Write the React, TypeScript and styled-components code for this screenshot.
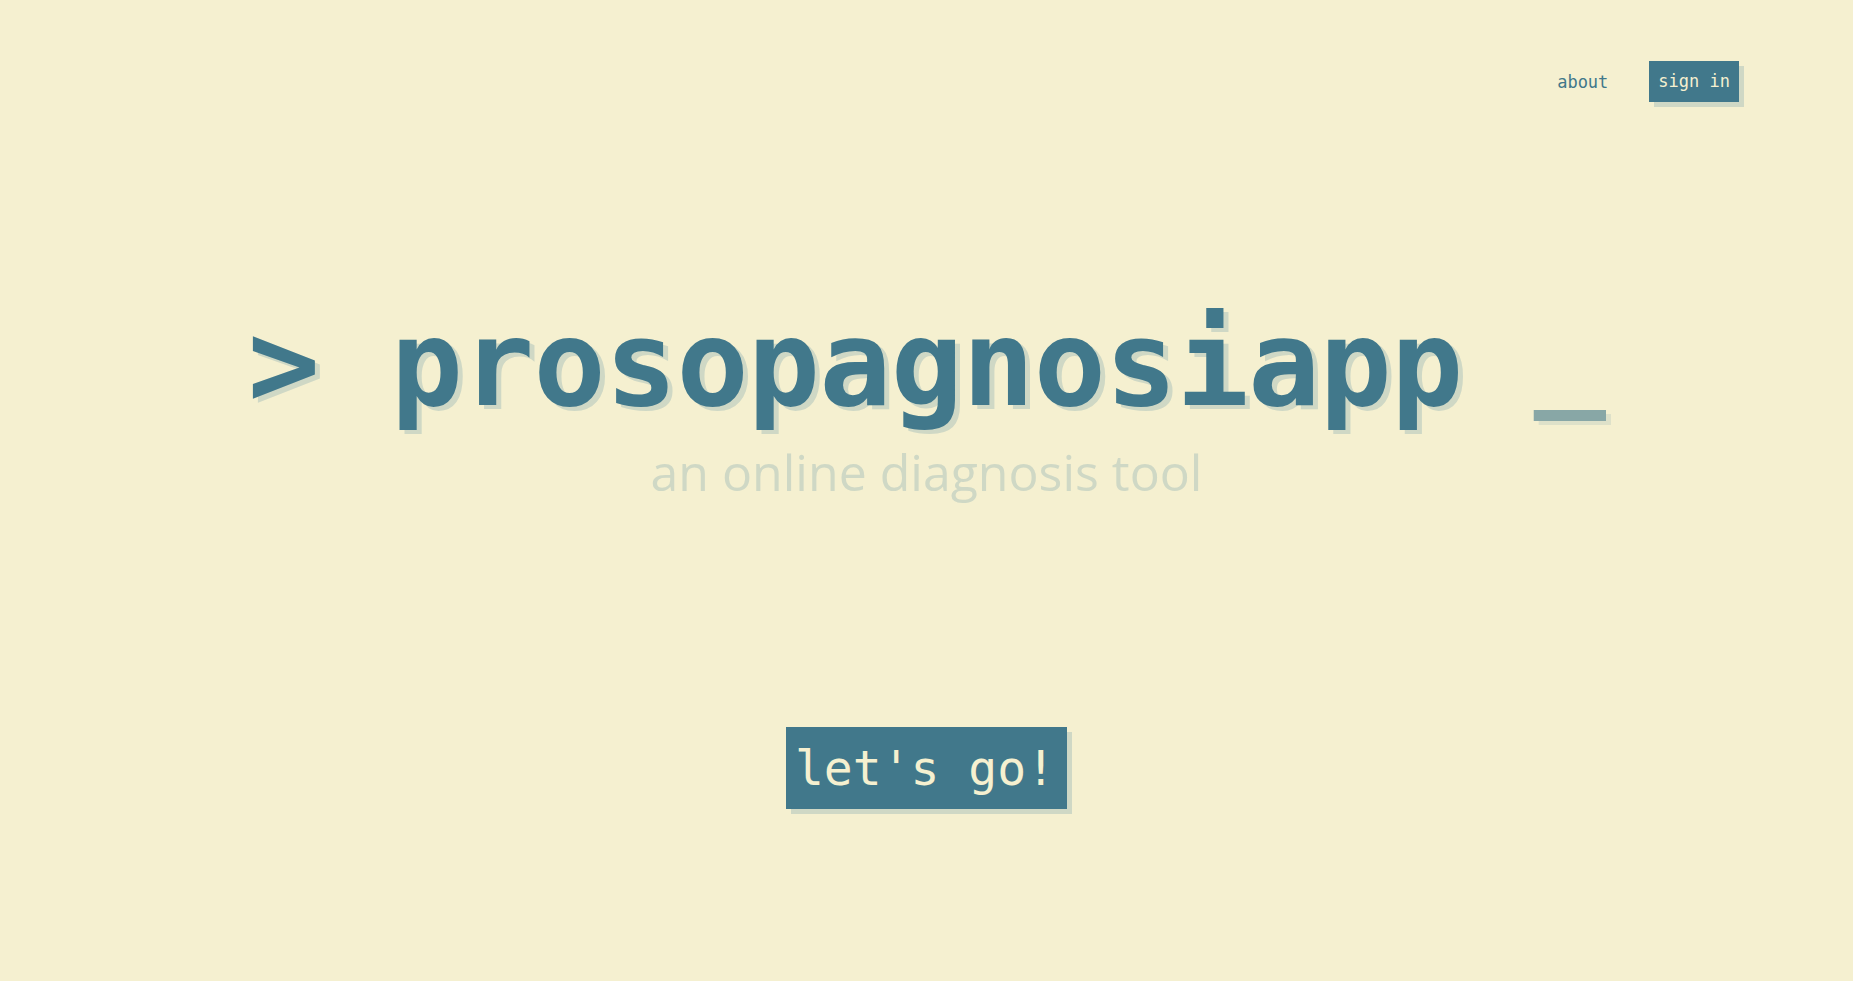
import React from "react";
import styled, { createGlobalStyle } from "styled-components";

const teal = "#41788b";
const cream = "#f5f0d0";
const shade = "#cfd8c5";

const GlobalStyle = createGlobalStyle`
  html, body {
    margin: 0;
    padding: 0;
    background: ${cream};
  }
  body {
    font-family: "DejaVu Sans Mono", monospace;
  }
`;

const Page = styled.div`
  min-height: 100vh;
  display: flex;
  flex-direction: column;
  background: ${cream};
`;

const Header = styled.nav`
  display: flex;
  justify-content: flex-end;
  align-items: center;
  gap: 32px;
  padding: 61px 114px 0 0;
`;

const NavLink = styled.a`
  font-family: "DejaVu Sans Mono", monospace;
  font-size: 17px;
  color: ${teal};
  text-decoration: none;
  padding: 10px 9px;
  cursor: pointer;
`;

const NavButton = styled.a`
  font-family: "DejaVu Sans Mono", monospace;
  font-size: 17px;
  line-height: 20px;
  color: ${cream};
  background: ${teal};
  padding: 10px 9px 11px;
  box-shadow: 5px 5px 0 ${shade};
  text-decoration: none;
  cursor: pointer;
`;

const Hero = styled.main`
  display: flex;
  flex-direction: column;
  align-items: center;
  padding-top: 192px;
`;

const Title = styled.h1`
  margin: 0;
  font-family: "DejaVu Sans Mono", monospace;
  font-weight: 700;
  font-size: 120px;
  line-height: 140px;
  letter-spacing: -0.8px;
  color: ${teal};
  white-space: pre;
  text-shadow: 5px 4px 0 ${shade};
`;

const Cursor = styled.span`
  line-height: 0;
  vertical-align: 12px;
  opacity: 0.6;
`;

const Subtitle = styled.p`
  margin: 4px 0 0;
  font-family: "Open Sans", sans-serif;
  font-weight: 400;
  font-size: 50px;
  line-height: 68px;
  color: ${shade};
`;

const Cta = styled.button`
  margin-top: 221px;
  font-family: "DejaVu Sans Mono", monospace;
  font-size: 48px;
  line-height: 56px;
  color: ${cream};
  background: ${teal};
  border: none;
  padding: 13px 12px 13px 9px;
  box-shadow: 5px 5px 0 ${shade};
  cursor: pointer;
`;

export default function App() {
  return (
    <Page>
      <GlobalStyle />
      <Header>
        <NavLink>about</NavLink>
        <NavButton>sign in</NavButton>
      </Header>
      <Hero>
        <Title>
          {"> prosopagnosiapp "}
          <Cursor>_</Cursor>
        </Title>
        <Subtitle>an online diagnosis tool</Subtitle>
        <Cta>let's go!</Cta>
      </Hero>
    </Page>
  );
}
